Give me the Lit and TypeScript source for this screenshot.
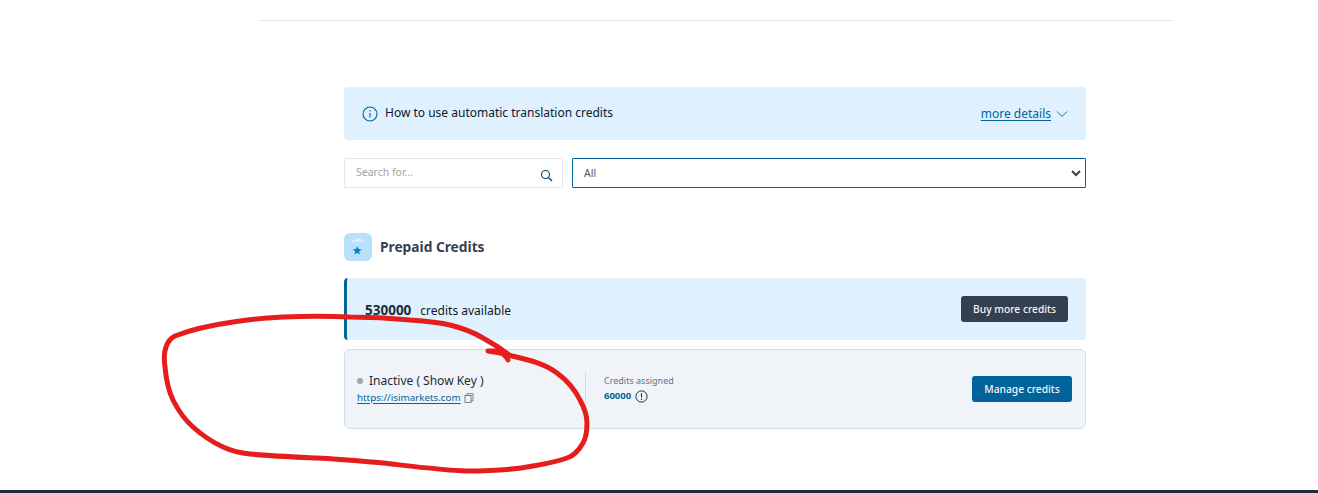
import { LitElement, html, css, svg } from "lit";
import { customElement } from "lit/decorators.js";

const SCRIBBLE =
  "M508 360 C506 356 503 353 498 351 L488 351 C496 352 505 354 512 356 C530 360 545 364 557 373 C568 381 575 390 580 400 C585 409 587 416 587 423 C587 432 586 438 583 443 C578 452 573 456 567 458 C556 462 545 464 533 466 C512 470 490 471 467 471 C440 470 410 466 383 463 C360 461 340 459 317 458 C295 457 270 456 250 454 C240 453 232 451 223 447 C212 442 203 436 193 427 C185 420 178 410 173 400 C168 390 166 378 165 367 C164 360 164 352 166 347 C168 341 171 338 175 336 C190 330 212 325 233 322 C250 319 265 318 283 317 C305 316 330 316 350 317 C370 317 390 318 410 320 C425 321 438 322 450 325 C462 328 473 332 483 338 C492 343 500 348 508 354";

@customElement("app-root")
export class AppRoot extends LitElement {
  static styles = css`
    :host {
      display: block;
      position: relative;
      height: 493px;
      overflow: hidden;
      background: #fff;
      font-family: "Noto Sans", "Open Sans", sans-serif;
      color: #1a202c;
    }
    .page {
      height: 490px;
      box-sizing: border-box;
      padding-left: 114px;
      display: flex;
      flex-direction: column;
      align-items: center;
    }
    .rule {
      width: 916px;
      height: 1px;
      margin-top: 20px;
      background: #e2e8f0;
      flex: none;
    }
    .content {
      width: 742px;
      margin-top: 66px;
      margin-right: 2px;
      display: flex;
      flex-direction: column;
    }
    .info {
      height: 53px;
      border-radius: 4px;
      background: #dff1fe;
      display: flex;
      align-items: center;
      padding: 0 18px;
      box-sizing: border-box;
      font-size: 12px;
      color: #111827;
    }
    .info-ic {
      margin-right: 7px;
      display: block;
    }
    .info-title {
      position: relative;
      top: -1px;
      flex: 1;
    }
    .more {
      color: #00639b;
      text-decoration: underline;
      text-underline-offset: 2px;
      font-size: 12px;
      margin-right: 5px;
    }
    .filters {
      margin-top: 18px;
      display: flex;
      gap: 9px;
      height: 30px;
    }
    .search {
      width: 219px;
      box-sizing: border-box;
      border: 1px solid #e5e7eb;
      display: flex;
      align-items: center;
      justify-content: space-between;
      padding: 0 9px 0 11px;
      border-radius: 1px;
      font-size: 10.5px;
      color: #a3a3a3;
    }
    .search svg {
      position: relative;
      top: 2px;
    }
    .search span {
      position: relative;
      top: -1px;
    }
    .select {
      flex: 1;
      box-sizing: border-box;
      border: 1px solid #00639b;
      border-radius: 1px;
      display: flex;
      align-items: center;
      justify-content: space-between;
      padding: 0 3px 0 11px;
      font-size: 10.5px;
      color: #4b5563;
    }
    .section {
      margin-top: 45px;
      display: flex;
      align-items: center;
      gap: 8px;
      height: 28px;
    }
    .section h2 {
      margin: 0;
      position: relative;
      top: -1px;
      font-size: 13.75px;
      font-weight: 700;
      color: #374151;
    }
    .avail {
      margin-top: 17px;
      height: 62px;
      box-sizing: border-box;
      background: #dff1fe;
      border-left: 3px solid #00639b;
      border-radius: 4px;
      display: flex;
      align-items: center;
      justify-content: space-between;
      padding: 0 18px;
    }
    .avail .num {
      font-size: 13.5px;
      font-weight: 700;
      color: #1f2937;
      margin-right: 9px;
    }
    .avail .lbl {
      font-size: 12px;
      color: #111827;
    }
    .btn {
      height: 26px;
      box-sizing: border-box;
      border-radius: 3px;
      color: #f3f4f6;
      font-size: 10.25px;
      font-weight: 500;
      display: flex;
      align-items: center;
      justify-content: center;
    }
    .btn.dark {
      width: 107px;
      background: #343f52;
    }
    .btn.blue {
      width: 100px;
      background: #00639b;
    }
    .card {
      margin-top: 9px;
      height: 80px;
      box-sizing: border-box;
      border: 1px solid #cfdfe8;
      border-radius: 6px;
      background: #f0f4f9;
      display: flex;
      align-items: center;
      padding: 0 13px 0 12px;
    }
    .left {
      width: 228px;
      box-sizing: border-box;
      align-self: center;
      margin-top: -1px;
    }
    .status {
      display: flex;
      align-items: center;
      font-size: 12px;
      color: #1f2937;
      line-height: 16px;
    }
    .dot {
      width: 6px;
      height: 6px;
      border-radius: 50%;
      background: #9ca3af;
      margin-right: 6px;
    }
    .url-row {
      display: flex;
      align-items: center;
      gap: 3px;
      margin-top: 2px;
      line-height: 14px;
    }
    .url {
      font-size: 9.8px;
      color: #00639b;
      text-decoration: underline;
      text-underline-offset: 2px;
    }
    .mid {
      flex: 1;
      height: 36px;
      border-left: 1px solid #cfdfe8;
      padding-left: 18px;
      box-sizing: border-box;
      display: flex;
      flex-direction: column;
      justify-content: center;
    }
    .assigned {
      font-size: 9px;
      color: #6b7280;
      line-height: 13px;
    }
    .amount {
      display: flex;
      align-items: center;
      gap: 4px;
      font-size: 9.5px;
      font-weight: 700;
      color: #00639b;
      line-height: 16px;
      margin-top: 1px;
    }
    .footer {
      height: 3px;
      background: #1c2b3d;
    }
    .scribble {
      position: absolute;
      left: 0;
      top: 0;
      width: 1318px;
      height: 493px;
      pointer-events: none;
    }
  `;

  render() {
    return html`
      <div class="page">
        <div class="rule"></div>
        <div class="content">
          <div class="info">
            <svg class="info-ic" width="16" height="16" viewBox="0 0 16 16" fill="none">
              <circle cx="8" cy="8" r="7" stroke="#00639b" stroke-width="1.1" />
              <path d="M8 7v4.5" stroke="#00639b" stroke-width="1.1" />
              <circle cx="8" cy="4.8" r=".7" fill="#00639b" />
            </svg>
            <span class="info-title">How to use automatic translation credits</span>
            <span class="more">more details</span>
            <svg width="12" height="12" viewBox="0 0 12 12" fill="none">
              <path d="M1 3.5l5 5 5-5" stroke="#00639b" stroke-width=".9" />
            </svg>
          </div>

          <div class="filters">
            <div class="search">
              <span>Search for...</span>
              <svg width="13" height="13" viewBox="0 0 13 13" fill="none">
                <circle cx="5.5" cy="5.5" r="4" stroke="#00436b" stroke-width="1.1" />
                <path d="M8.5 8.5L12 12" stroke="#00436b" stroke-width="1.2" />
              </svg>
            </div>
            <div class="select">
              <span>All</span>
              <svg width="12" height="12" viewBox="0 0 12 12" fill="none">
                <path d="M2 4l4 4 4-4" stroke="#374151" stroke-width="2" />
              </svg>
            </div>
          </div>

          <div class="section">
            <svg width="28" height="28" viewBox="0 0 28 28">
              <rect width="28" height="28" rx="6" fill="#b8e2fb" />
              <path d="M8 7.5h12v1H8z" fill="#e6f5fe" />
              <path d="M10.5 7.5c.5-3 6.5-3 7 0z" fill="#e6f5fe" />
              <path
                d="M13.2 13.2l1.3 2.9 3.1.3-2.4 2 .8 3-2.8-1.6-2.8 1.6.8-3-2.4-2 3.1-.3z"
                fill="#0a7fc4"
              />
            </svg>
            <h2>Prepaid Credits</h2>
          </div>

          <div class="avail">
            <div><span class="num">530000</span><span class="lbl">credits available</span></div>
            <div class="btn dark">Buy more credits</div>
          </div>

          <div class="card">
            <div class="left">
              <div class="status"><span class="dot"></span>Inactive ( Show Key )</div>
              <div class="url-row">
                <span class="url">https://isimarkets.com</span>
                <svg width="10" height="10" viewBox="0 0 10 10" fill="none">
                  <rect x="1" y="2.5" width="6" height="7" stroke="#6b7280" stroke-width=".9" />
                  <path d="M3 2.5V.7h6v7H7" stroke="#6b7280" stroke-width=".9" />
                </svg>
              </div>
            </div>
            <div class="mid">
              <div class="assigned">Credits assigned</div>
              <div class="amount">
                60000
                <svg width="13" height="13" viewBox="0 0 13 13" fill="none">
                  <circle cx="6.5" cy="6.5" r="5.6" stroke="#1f2937" stroke-width="1" />
                  <path d="M6.5 3.2v4.2" stroke="#1f2937" stroke-width="1.1" />
                  <circle cx="6.5" cy="9.3" r=".7" fill="#1f2937" />
                </svg>
              </div>
            </div>
            <div class="btn blue">Manage credits</div>
          </div>
        </div>
      </div>
      <div class="footer"></div>
      <svg class="scribble" viewBox="0 0 1318 493" fill="none">
        ${svg`<path d=${SCRIBBLE} stroke="#e71d1d" stroke-width="5" stroke-linecap="round" stroke-linejoin="round" />`}
      </svg>
    `;
  }
}
